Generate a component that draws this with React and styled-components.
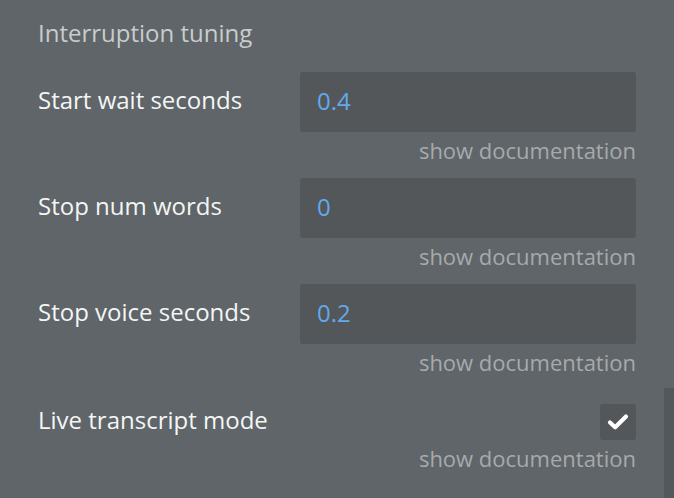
import React from 'react';
import styled, { createGlobalStyle } from 'styled-components';

const GlobalStyle = createGlobalStyle`
  html, body {
    margin: 0;
    padding: 0;
    background: #5f6568;
    font-family: "Open Sans", "Noto Sans", sans-serif;
    overflow: hidden;
  }
`;

const Panel = styled.div`
  position: relative;
  width: 674px;
  height: 498px;
  box-sizing: border-box;
  padding: 18px 38px 0 38px;
  background: #5f6568;
`;

const Heading = styled.div`
  font-size: 24px;
  line-height: 30px;
  color: #c9cccd;
  margin-bottom: 24px;
`;

const Field = styled.div`
  margin-top: ${(p) => p.gap || 0}px;
`;

const Control = styled.div`
  display: flex;
  align-items: center;
  justify-content: space-between;
  height: ${(p) => p.height}px;
`;

const Label = styled.div`
  font-size: 24px;
  line-height: 30px;
  padding-bottom: 4px;
  color: #f4f5f5;
`;

const Input = styled.div`
  box-sizing: border-box;
  width: 336px;
  height: 60px;
  border-radius: 3px;
  background: #53575a;
  padding: 0 0 3px 17px;
  display: flex;
  align-items: center;
  font-size: 24px;
  color: #62a9ec;
`;

const Checkbox = styled.div`
  width: 36px;
  height: 36px;
  border-radius: 3px;
  background: #53575a;
  display: flex;
  align-items: center;
  justify-content: center;
`;

const DocLink = styled.div`
  text-align: right;
  font-size: 22px;
  line-height: 26px;
  margin-top: ${(p) => p.offset}px;
  color: #a7aaac;
`;

const Scrollbar = styled.div`
  position: absolute;
  right: 0;
  top: 388px;
  width: 10px;
  bottom: 0;
  background: #54585b;
`;

const fields = [
  { label: 'Start wait seconds', value: '0.4' },
  { label: 'Stop num words', value: '0' },
  { label: 'Stop voice seconds', value: '0.2' },
];

export default function App() {
  return (
    <Panel>
      <GlobalStyle />
      <Heading>Interruption tuning</Heading>
      {fields.map((f, i) => (
        <Field key={f.label} gap={i === 0 ? 0 : 15}>
          <Control height={60}>
            <Label>{f.label}</Label>
            <Input>{f.value}</Input>
          </Control>
          <DocLink offset={5}>show documentation</DocLink>
        </Field>
      ))}
      <Field gap={29}>
        <Control height={36}>
          <Label>Live transcript mode</Label>
          <Checkbox>
            <svg width="22" height="18" viewBox="0 0 22 18">
              <path d="M3 9.5 L8.2 14.2 L19 3.6" fill="none" stroke="#ffffff" strokeWidth="4.2" strokeLinecap="round" strokeLinejoin="round" />
            </svg>
          </Checkbox>
        </Control>
        <DocLink offset={5}>show documentation</DocLink>
      </Field>
      <Scrollbar />
    </Panel>
  );
}
